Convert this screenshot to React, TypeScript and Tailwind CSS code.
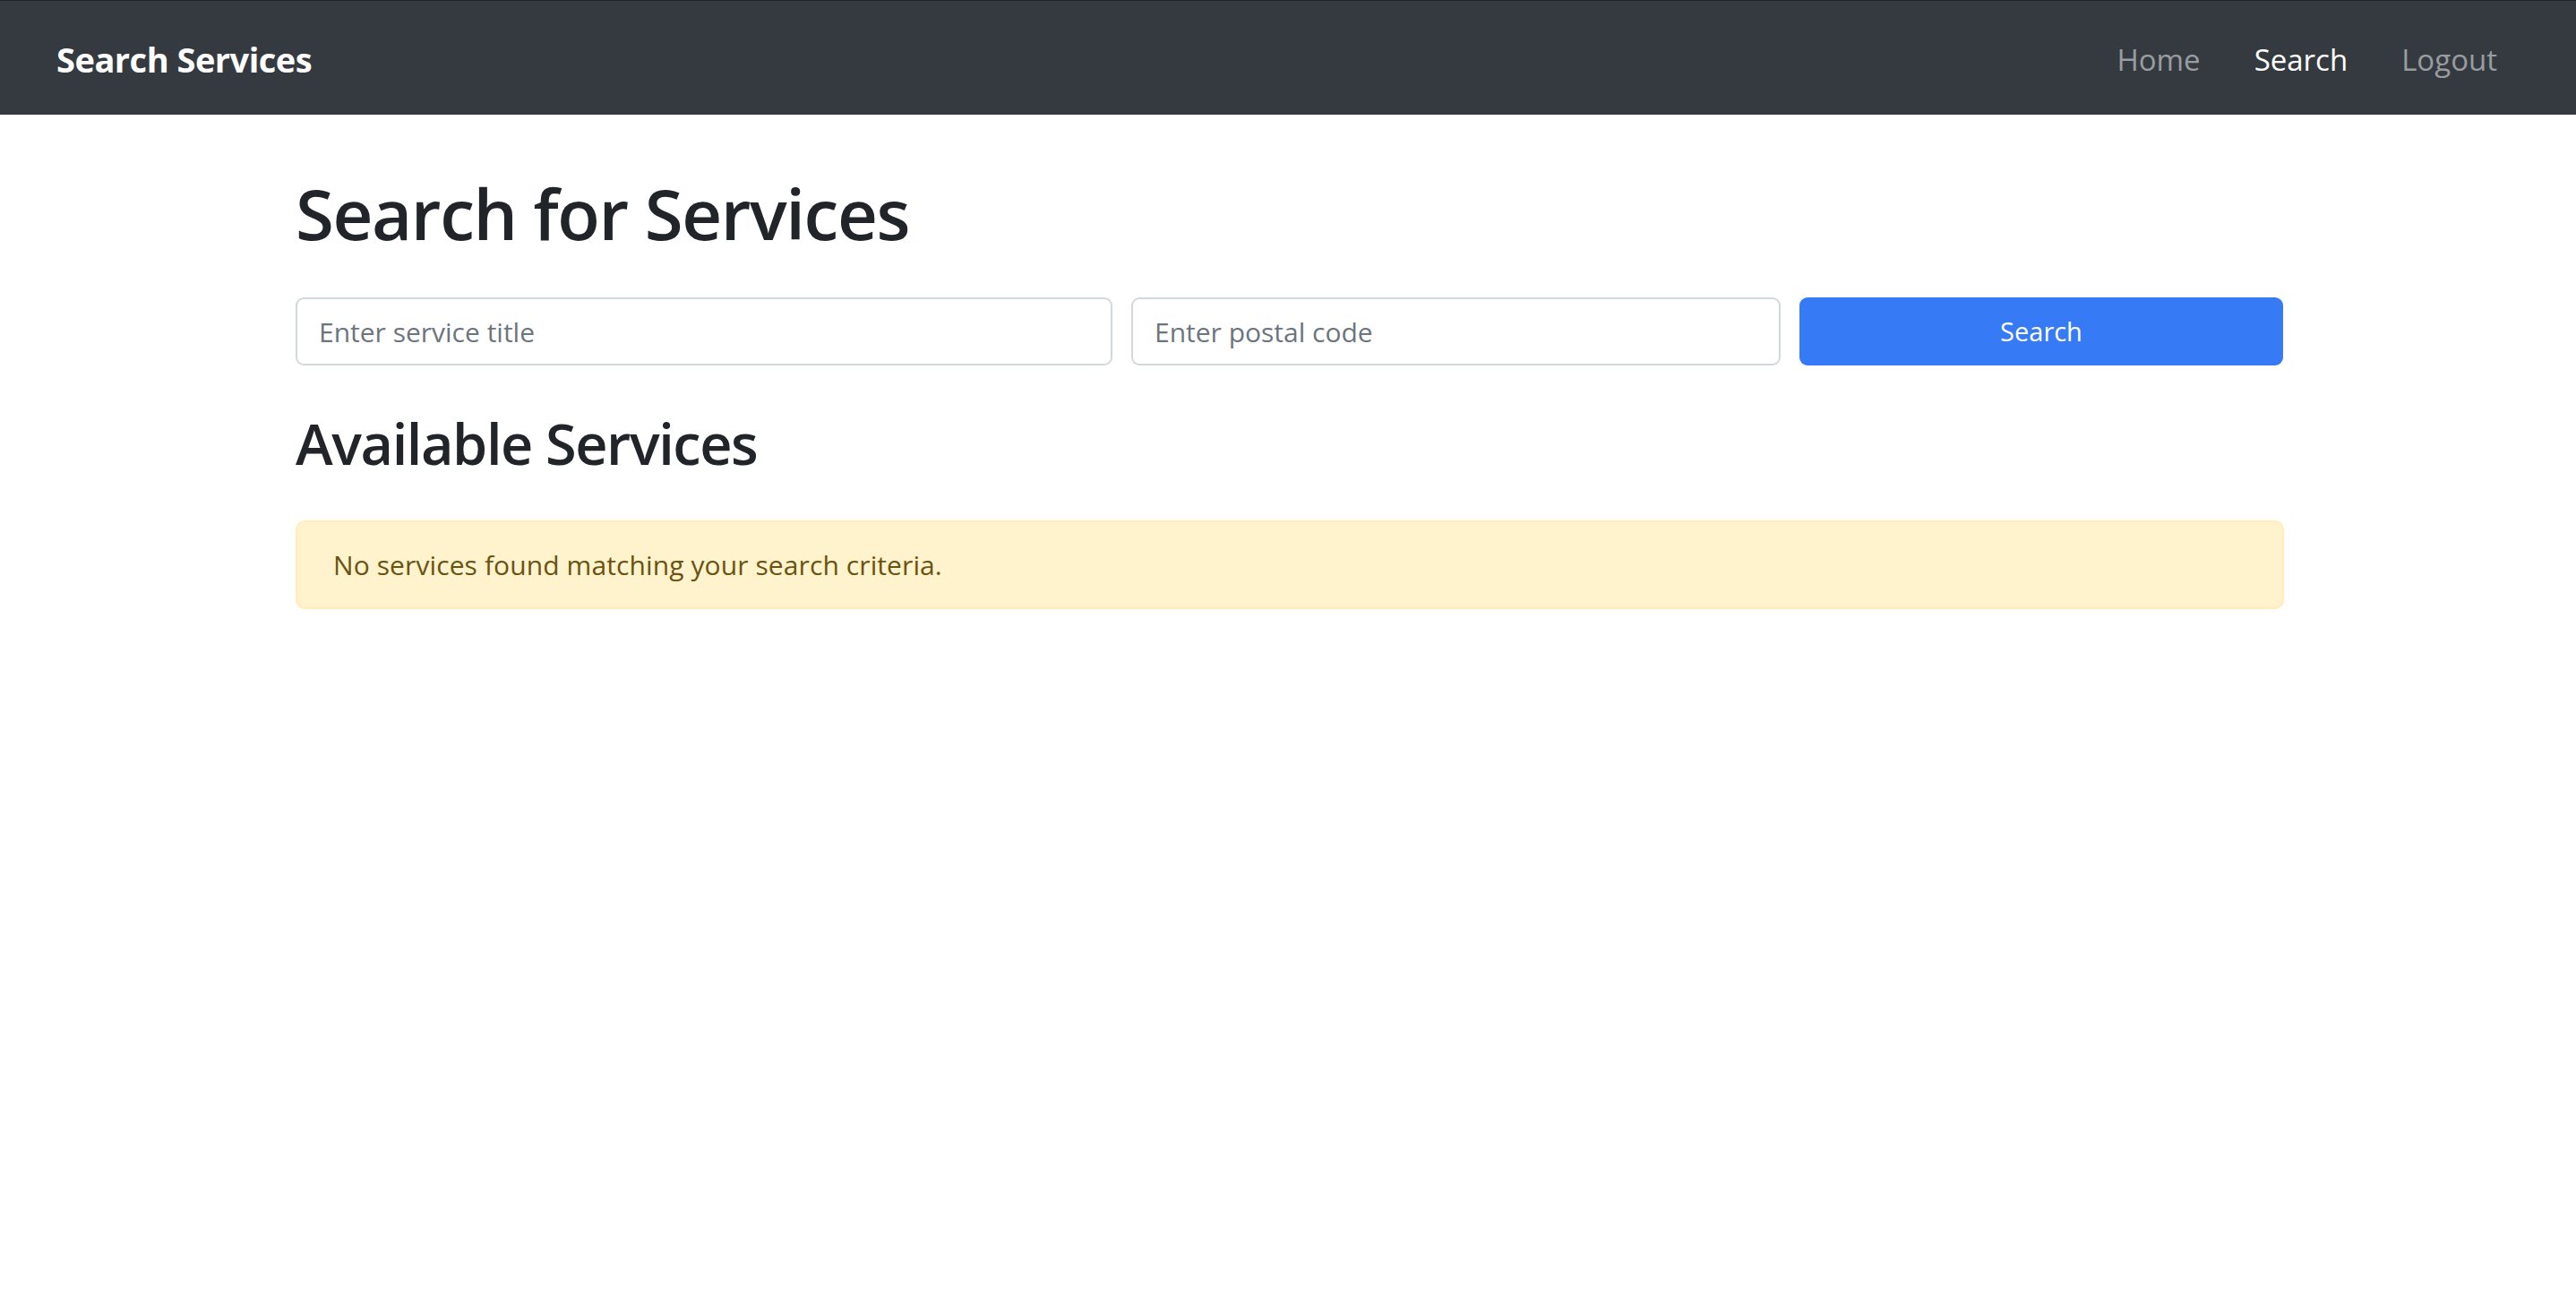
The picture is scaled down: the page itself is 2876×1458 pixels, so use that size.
import React from "react";

export default function App() {
  const font = { fontFamily: '"Open Sans", "Noto Sans", sans-serif' };
  return (
    <div className="min-h-screen bg-white" style={font}>
      <nav className="h-[128px] bg-[#343a40] border-t border-[#1e2125] flex items-center justify-between pl-[63px] pr-[88px]">
        <a className="text-white font-bold text-[38px] leading-none tracking-[-0.5px] pt-[3px]">Search Services</a>
        <div className="flex items-center gap-[60px] text-[33px] leading-none pt-[3px]">
          <a className="text-[#9a9da0]">Home</a>
          <a className="text-white">Search</a>
          <a className="text-[#9a9da0]">Logout</a>
        </div>
      </nav>
      <main className="w-[2220px] ml-[330px]">
        <h1 className="mt-[60px] text-[78px] leading-[100px] font-semibold text-[#212529] tracking-[-1.4px]">Search for Services</h1>
        <div className="mt-[44px] grid grid-cols-[912px_725px_540px] gap-x-[21px]">
          <input
            className="h-[76px] border-2 border-[#d3d8dd] rounded-[9px] px-[24px] text-[30px] text-[#212529] placeholder:text-[#6c757d] outline-none"
            style={font}
            placeholder="Enter service title"
          />
          <input
            className="h-[76px] border-2 border-[#d3d8dd] rounded-[9px] px-[24px] text-[30px] text-[#212529] placeholder:text-[#6c757d] outline-none"
            style={font}
            placeholder="Enter postal code"
          />
          <button className="h-[76px] rounded-[9px] bg-[#367af6] text-white text-[29px]" style={font}>
            Search
          </button>
        </div>
        <h2 className="mt-[46px] text-[63px] leading-[82px] font-semibold text-[#212529] tracking-[-1.4px]">Available Services</h2>
        <div className="mt-[45px] h-[99px] bg-[#fff3cd] border-2 border-[#ffeebb] rounded-[10px] flex items-center pl-[40px] text-[30px] tracking-[0.1px] text-[#6b5210]">
          No services found matching your search criteria.
        </div>
      </main>
    </div>
  );
}
